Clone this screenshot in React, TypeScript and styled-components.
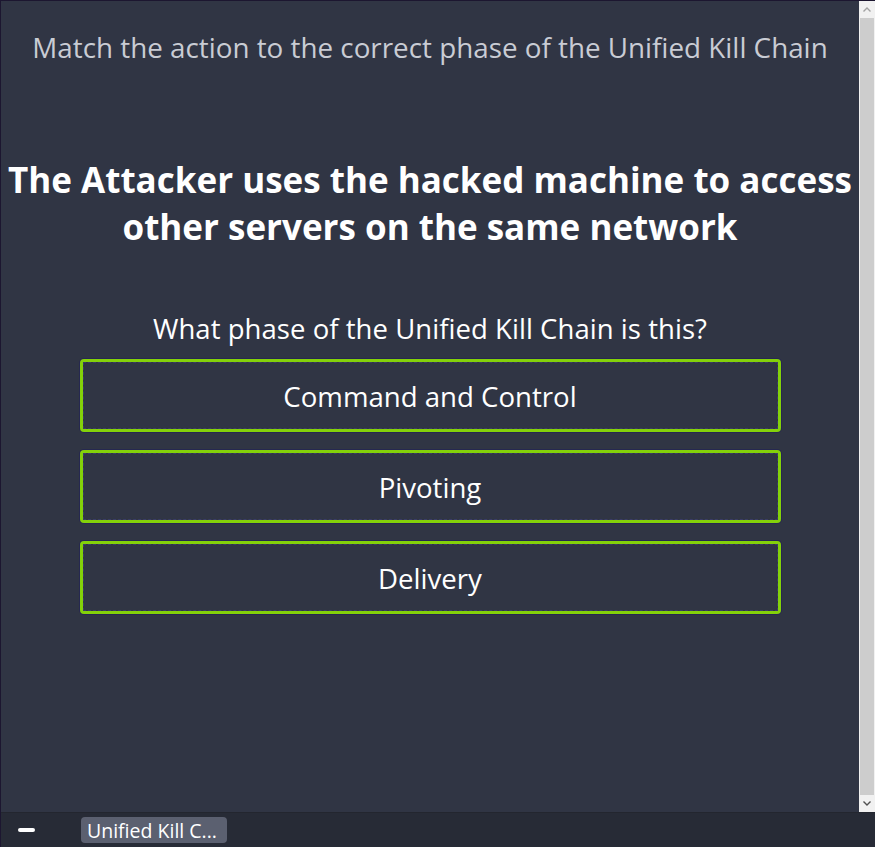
import React from "react";
import styled, { createGlobalStyle } from "styled-components";

const GlobalStyle = createGlobalStyle`
  html, body {
    margin: 0;
    padding: 0;
    background: #303544;
    overflow: hidden;
  }
  * { box-sizing: border-box; }
`;

const Frame = styled.div`
  width: 875px;
  height: 847px;
  display: flex;
  flex-direction: column;
  border-top: 1px solid #1c1630;
  border-left: 1px solid #1c1630;
  font-family: "Segoe UI", "Open Sans", "Noto Sans", sans-serif;
`;

const Body = styled.div`
  flex: 1;
  display: flex;
  min-height: 0;
`;

const Content = styled.div`
  flex: 1;
  display: flex;
  flex-direction: column;
  align-items: center;
  background: #303544;
  color: #fff;
`;

const Prompt = styled.div`
  margin-top: 27px;
  font-size: 27.8px;
  color: #c9ccd4;
  white-space: nowrap;
`;

const Heading = styled.h1`
  margin: 90px 0 0;
  font-size: 35px;
  font-weight: 700;
  line-height: 47px;
  text-align: center;
  letter-spacing: 0;
  white-space: nowrap;
`;

const Question = styled.div`
  margin-top: 60px;
  font-size: 27.5px;
  letter-spacing: 0.05px;
`;

const Options = styled.div`
  margin-top: 12px;
  display: flex;
  flex-direction: column;
  gap: 18px;
  width: 701px;
`;

const Option = styled.button`
  height: 73px;
  background: transparent;
  border: 3px solid #84d10a;
  border-radius: 4px;
  outline: 1px dashed #3a3c66;
  outline-offset: -4px;
  box-shadow: 0 0 0 1px #262850;
  color: #fff;
  font-family: inherit;
  font-size: 27.6px;
  cursor: pointer;
`;

const Scrollbar = styled.div`
  width: 16px;
  display: flex;
  flex-direction: column;
  background: #f1f1f1;
`;

const Arrow = styled.div`
  height: 17px;
  display: flex;
  align-items: center;
  justify-content: center;
  background: #f1f1f1;
`;

const Thumb = styled.div`
  flex: 1;
  margin: 0 1px;
  background: #cdcdcd;
`;

const Taskbar = styled.div`
  height: 35px;
  display: flex;
  align-items: center;
  padding-left: 17px;
  gap: 46px;
  background: #272b36;
  border-top: 1px solid #23262f;
`;

const Dash = styled.div`
  width: 17px;
  height: 4px;
  border-radius: 2px;
  background: #fff;
`;

const Tab = styled.div`
  height: 26px;
  width: 146px;
  padding: 0 6px;
  display: flex;
  align-items: center;
  border-radius: 4px;
  background: #5b6070;
  color: #fff;
  font-size: 19.5px;
  white-space: nowrap;
`;

export default function App() {
  const options = ["Command and Control", "Pivoting", "Delivery"];
  return (
    <>
      <GlobalStyle />
      <Frame>
        <Body>
          <Content>
            <Prompt>Match the action to the correct phase of the Unified Kill Chain</Prompt>
            <Heading>
              The Attacker uses the hacked machine to access
              <br />
              other servers on the same network
            </Heading>
            <Question>What phase of the Unified Kill Chain is this?</Question>
            <Options>
              {options.map((o) => (
                <Option key={o}>{o}</Option>
              ))}
            </Options>
          </Content>
          <Scrollbar>
            <Arrow>
              <svg width="8" height="5" viewBox="0 0 8 5">
                <path d="M0.5 4.5 L4 1 L7.5 4.5" fill="none" stroke="#a3a3a3" strokeWidth="1.4" />
              </svg>
            </Arrow>
            <Thumb />
            <Arrow>
              <svg width="8" height="5" viewBox="0 0 8 5">
                <path d="M0.5 0.5 L4 4 L7.5 0.5" fill="none" stroke="#505050" strokeWidth="1.4" />
              </svg>
            </Arrow>
          </Scrollbar>
        </Body>
        <Taskbar>
          <Dash />
          <Tab>Unified Kill C...</Tab>
        </Taskbar>
      </Frame>
    </>
  );
}
